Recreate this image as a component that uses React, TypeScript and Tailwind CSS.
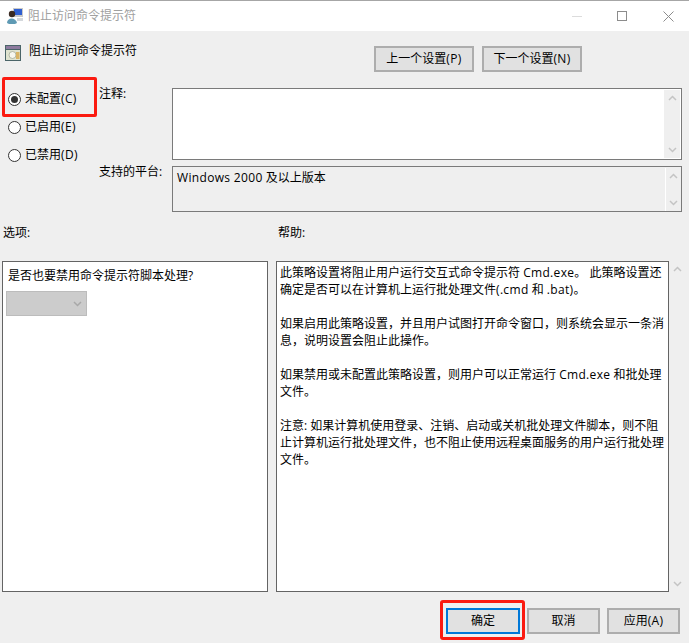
const FONT = "font-['Open_Sans','Noto_Sans_CJK_SC',sans-serif]"

// latin runs sit a little wider in the reference
function L({ children }: { children: string }) {
  return <span className="tracking-[0.33px]">{children}</span>
}

function Radio({ label, hot, checked }: { label: string; hot: string; checked?: boolean }) {
  return (
    <div className="flex h-[28px] items-center gap-[4px]">
      <span className="flex h-[13px] w-[13px] items-center justify-center rounded-full border border-[#333] bg-white">
        {checked && <span className="h-[7px] w-[7px] rounded-full bg-[#333]" />}
      </span>
      <span className="pb-[2px]">{label}<L>{hot}</L></span>
    </div>
  )
}

function Btn({ children, className }: { children: React.ReactNode; className: string }) {
  return (
    <div className={`flex h-[26px] items-center justify-center border-2 border-[#adadad] bg-[#e1e1e1] pb-[2px] ${className}`}>
      <span>{children}</span>
    </div>
  )
}

function Chevron({ up, color = '#c4c4c4' }: { up?: boolean; color?: string }) {
  return (
    <svg width="9" height="6" viewBox="0 0 9 6" fill="none">
      <path d={up ? 'M1 5 L4.5 1.5 L8 5' : 'M1 1 L4.5 4.5 L8 1'} stroke={color} strokeWidth="1.5" />
    </svg>
  )
}

function ScrollBar({ className }: { className: string }) {
  return (
    <div className={`flex w-[16px] shrink-0 flex-col items-center justify-between bg-[#efefef] py-[5px] ${className}`}>
      <Chevron up />
      <Chevron />
    </div>
  )
}

export default function App() {
  return (
    <div className={`${FONT} relative h-[643px] w-[689px] overflow-hidden bg-[#efefef] text-[12px] leading-[17px] text-black`}>
      {/* title bar */}
      <div className="flex h-[31px] items-center border-t border-[#a6a6a6] bg-white">
        <svg className="ml-[7px]" width="16" height="16" viewBox="0 0 16 16">
          <rect x="6" y="0" width="10" height="9" fill="#c9c9c9" />
          <rect x="7" y="1" width="8" height="6" fill="#2f5fd0" />
          <path d="M0 15 C0 9 9 9 10 15 L8 16 H2 Z" fill="#5f9ab4" />
          <circle cx="5" cy="6" r="3.2" fill="#3a2a22" />
          <rect x="10" y="10" width="6" height="3" fill="#d4d8dc" />
        </svg>
        <span className="ml-[5px] pb-[1px] text-[#a0a0a0]">阻止访问命令提示符</span>
        <div className="ml-auto mr-[15px] flex items-center">
          <div className="h-px w-[10px] bg-[#dcdcdc]" />
          <div className="ml-[35px] h-[10px] w-[10px] border border-[#8c8c8c]" />
          <svg className="ml-[36px]" width="11" height="11" viewBox="0 0 11 11">
            <path d="M0.5 0.5 L10.5 10.5 M10.5 0.5 L0.5 10.5" stroke="#8c8c8c" />
          </svg>
        </div>
      </div>

      {/* header row */}
      <div className="flex h-[41px] pt-[14px]">
        <div className="flex w-[374px] items-start pl-[5px]">
          <svg width="16" height="16" viewBox="0 0 16 16">
            <rect x="0" y="0" width="16" height="16" fill="#4a6468" />
            <rect x="1" y="1" width="14" height="3" fill="#8d7a9e" />
            <rect x="1" y="5" width="14" height="10" fill="#dfe3cf" />
            <circle cx="7.5" cy="10" r="3.5" fill="#f7f7ee" stroke="#9aa08c" strokeWidth="0.7" />
            <rect x="11" y="7" width="3.5" height="7" fill="#d9b465" />
          </svg>
          <span className="ml-[8px] mt-[-3px]">阻止访问命令提示符</span>
        </div>
        <div className="mt-px flex gap-[8px]">
          <Btn className="w-[100px]">上一个设置<L>(P)</L></Btn>
          <Btn className="w-[100px]">下一个设置<L>(N)</L></Btn>
        </div>
      </div>

      {/* state and comment row */}
      <div className="flex h-[140px]">
        <div className="w-[99px] pl-[8px] pt-[13px]">
          <Radio label="未配置" hot="(C)" checked />
          <Radio label="已启用" hot="(E)" />
          <Radio label="已禁用" hot="(D)" />
        </div>
        <div className="w-[73px] pt-[13px]">
          <div>注释:</div>
          <div className="mt-[61px]">支持的平台:</div>
        </div>
        <div className="flex w-[510px] flex-col gap-[6px] pt-[16px]">
          <div className="flex h-[72px] justify-end border border-[#7a7a7a] bg-white p-px">
            <ScrollBar className="" />
          </div>
          <div className="flex h-[46px] border border-[#7a7a7a] bg-[#efefef] pl-[4px] pt-[1px]">
            <span className="flex-1 pt-[1px]"><L>Windows 2000</L> 及以上版本</span>
            <ScrollBar className="border-l border-white" />
          </div>
        </div>
      </div>

      {/* labels */}
      <div className="flex h-[49px] pt-[12px]">
        <span className="ml-[3px] w-[275px]">选项:</span>
        <span>帮助:</span>
      </div>

      {/* panels */}
      <div className="flex h-[331px] pl-[2px]">
        <div className="h-full w-[266px] border border-[#646464] bg-white pl-[3px] pt-[5px]">
          <div className="pl-[2px]">是否也要禁用命令提示符脚本处理?</div>
          <div className="mt-[7px] flex h-[25px] w-[81px] items-center justify-end border border-[#bcbcbc] bg-[#cccccc] pr-[4px]">
            <Chevron color="#a8a8a8" />
          </div>
        </div>
        <div className="ml-[8px] flex h-full w-[393px] border border-[#646464] bg-white">
          <div className="flex-1 pl-[3px] pr-[2px] pt-[1px]">
            <p className="pt-[1px]">此策略设置将阻止用户运行交互式命令提示符 <L>Cmd.exe</L>。 此策略设置还确定是否可以在计算机上运行批处理文件<L>(.cmd</L> 和 <L>.bat)</L>。</p>
            <p className="mt-[17px]">如果启用此策略设置，并且用户试图打开命令窗口，则系统会显示一条消息，说明设置会阻止此操作。</p>
            <p className="mt-[17px]">如果禁用或未配置此策略设置，则用户可以正常运行 <L>Cmd.exe</L> 和批处理文件。</p>
            <p className="mt-[17px]">注意: 如果计算机使用登录、注销、启动或关机批处理文件脚本，则不阻止计算机运行批处理文件，也不阻止使用远程桌面服务的用户运行批处理文件。</p>
          </div>
        </div>
        <ScrollBar className="bg-[#efefef]" />
      </div>

      {/* footer buttons */}
      <div className="flex gap-[7px] pl-[446px] pt-[16px]">
        <div className="flex h-[26px] w-[74px] items-center justify-center border-2 border-[#0078d7] bg-[#e1e1e1] pb-[2px]">确定</div>
        <Btn className="w-[73px]">取消</Btn>
        <Btn className="w-[73px]">应用<L>(A)</L></Btn>
      </div>

      {/* annotation boxes drawn over the dialog */}
      <div className="absolute left-[2px] top-[77px] h-[40px] w-[95px] rounded-[2px] border-[3px] border-[#fb1a10]" />
      <div className="absolute left-[440px] top-[600px] h-[40px] w-[85px] rounded-[3px] border-[3px] border-[#fb1a10]" />
    </div>
  )
}
